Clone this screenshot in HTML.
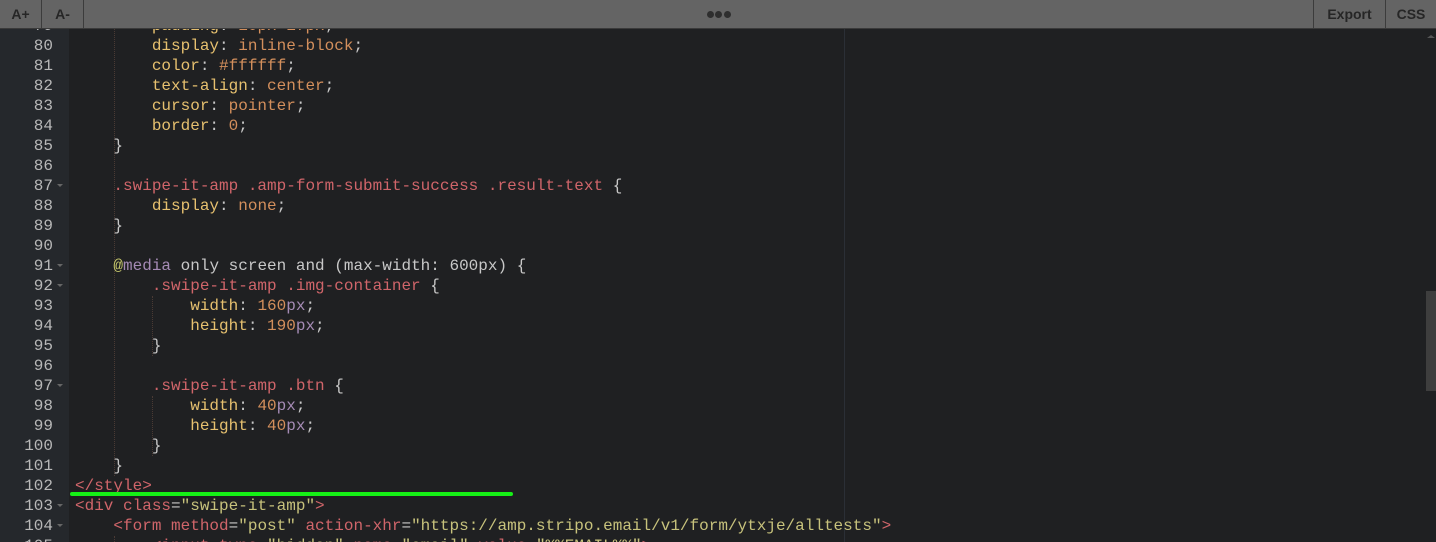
<!DOCTYPE html>
<html style="width:1436px;height:542px;overflow:hidden"><head><meta charset="utf-8"><style>
*{margin:0;padding:0;box-sizing:border-box}
body{width:1436px;height:542px;overflow:hidden;background:#1f2022;position:relative;font-family:"Liberation Mono",monospace;}
#tb{position:absolute;left:0;top:0;width:1436px;height:29px;background:#646464;border-bottom:1px solid #3a3a3a;z-index:5;font-family:"Liberation Sans",sans-serif;font-weight:bold;font-size:14px;color:#262626}
.b{position:absolute;top:0;height:28px;line-height:28px;text-align:center;border-right:1px solid #3c3c3c}
.dot{position:absolute;top:11px;width:7px;height:7px;border-radius:4px;background:#2e2e2e}
#gut{position:absolute;left:0;top:0;width:69px;height:542px;background:#25282c}
.l{position:absolute;left:0;height:20px;line-height:20px;font-size:16px;white-space:pre;width:1420px}
.n{position:absolute;left:0;width:53px;text-align:right;color:#b8b8b8}
.c{position:absolute;left:75px;color:#c8c8c8}
.f{position:absolute;left:57px;top:8px;width:0;height:0;border-left:3px solid transparent;border-right:3px solid transparent;border-top:3px solid #666}
.p{color:#e6c06f}.v{color:#d38f5c}.s{color:#d0656a}.u{color:#a58bb5}.at{color:#c4c56a}.st{color:#c7c27c}
.g{position:absolute;width:0;border-left:1px dotted #4a3a34}
</style></head><body>
<div id="gut"></div>
<div style="position:absolute;left:844px;top:29px;width:1px;height:513px;background:#2b2f36"></div>
<div style="position:absolute;left:1426px;top:291px;width:10px;height:100px;background:#3e3e3e"></div>
<div style="position:absolute;left:1427px;top:35px;width:0;height:0;border-left:4px solid transparent;border-right:4px solid transparent;border-bottom:3px solid #555"></div>
<div class="g" style="left:114px;top:29px;height:447px"></div>
<div class="g" style="left:152px;top:296px;height:60px"></div>
<div class="g" style="left:152px;top:396px;height:60px"></div>
<div class="g" style="left:114px;top:536px;height:6px"></div>

<div class="l" style="top:16px"><span class="n">79</span><span class="c">        <span class="p">padding</span>: <span class="v">10px 17px</span>;</span></div>
<div class="l" style="top:36px"><span class="n">80</span><span class="c">        <span class="p">display</span>: <span class="v">inline-block</span>;</span></div>
<div class="l" style="top:56px"><span class="n">81</span><span class="c">        <span class="p">color</span>: <span class="v">#ffffff</span>;</span></div>
<div class="l" style="top:76px"><span class="n">82</span><span class="c">        <span class="p">text-align</span>: <span class="v">center</span>;</span></div>
<div class="l" style="top:96px"><span class="n">83</span><span class="c">        <span class="p">cursor</span>: <span class="v">pointer</span>;</span></div>
<div class="l" style="top:116px"><span class="n">84</span><span class="c">        <span class="p">border</span>: <span class="v">0</span>;</span></div>
<div class="l" style="top:136px"><span class="n">85</span><span class="c">    }</span></div>
<div class="l" style="top:156px"><span class="n">86</span></div>
<div class="l" style="top:176px"><span class="n">87</span><span class="f"></span><span class="c">    <span class="s">.swipe-it-amp .amp-form-submit-success .result-text</span> {</span></div>
<div class="l" style="top:196px"><span class="n">88</span><span class="c">        <span class="p">display</span>: <span class="v">none</span>;</span></div>
<div class="l" style="top:216px"><span class="n">89</span><span class="c">    }</span></div>
<div class="l" style="top:236px"><span class="n">90</span></div>
<div class="l" style="top:256px"><span class="n">91</span><span class="f"></span><span class="c">    <span class="at">@</span><span class="u">media</span> only screen and (max-width: 600px) {</span></div>
<div class="l" style="top:276px"><span class="n">92</span><span class="f"></span><span class="c">        <span class="s">.swipe-it-amp .img-container</span> {</span></div>
<div class="l" style="top:296px"><span class="n">93</span><span class="c">            <span class="p">width</span>: <span class="v">160</span><span class="u">px</span>;</span></div>
<div class="l" style="top:316px"><span class="n">94</span><span class="c">            <span class="p">height</span>: <span class="v">190</span><span class="u">px</span>;</span></div>
<div class="l" style="top:336px"><span class="n">95</span><span class="c">        }</span></div>
<div class="l" style="top:356px"><span class="n">96</span></div>
<div class="l" style="top:376px"><span class="n">97</span><span class="f"></span><span class="c">        <span class="s">.swipe-it-amp .btn</span> {</span></div>
<div class="l" style="top:396px"><span class="n">98</span><span class="c">            <span class="p">width</span>: <span class="v">40</span><span class="u">px</span>;</span></div>
<div class="l" style="top:416px"><span class="n">99</span><span class="c">            <span class="p">height</span>: <span class="v">40</span><span class="u">px</span>;</span></div>
<div class="l" style="top:436px"><span class="n">100</span><span class="c">        }</span></div>
<div class="l" style="top:456px"><span class="n">101</span><span class="c">    }</span></div>
<div class="l" style="top:476px"><span class="n">102</span><span class="c"><span class="s">&lt;/style&gt;</span></span></div>
<div class="l" style="top:496px"><span class="n">103</span><span class="f"></span><span class="c"><span class="s">&lt;div class</span>=<span class="st">"swipe-it-amp"</span><span class="s">&gt;</span></span></div>
<div class="l" style="top:516px"><span class="n">104</span><span class="f"></span><span class="c">    <span class="s">&lt;form method</span>=<span class="st">"post"</span> <span class="s">action-xhr</span>=<span class="st">"https://amp.stripo.email/v1/form/ytxje/alltests"</span><span class="s">&gt;</span></span></div>
<div class="l" style="top:536px;height:6px;overflow:hidden"><span class="n">105</span><span class="c">        <span class="s">&lt;input type</span>=<span class="st">"hidden"</span> <span class="s">name</span>=<span class="st">"email"</span> <span class="s">value</span>=<span class="st">"%%EMAIL%%"</span><span class="s">&gt;</span></span></div>

<div style="position:absolute;left:70px;top:492px;width:443px;height:4px;background:#16f016;border-radius:2px"></div>

<div id="tb">
<div class="b" style="left:0;width:42px">A+</div>
<div class="b" style="left:42px;width:42px">A-</div>
<div class="dot" style="left:707px"></div><div class="dot" style="left:715px"></div><div class="dot" style="left:724px"></div>
<div class="b" style="left:1313px;width:73px;border-left:1px solid #3c3c3c">Export</div>
<div class="b" style="left:1386px;width:50px;border-right:0">CSS</div>
</div>
</body></html>
